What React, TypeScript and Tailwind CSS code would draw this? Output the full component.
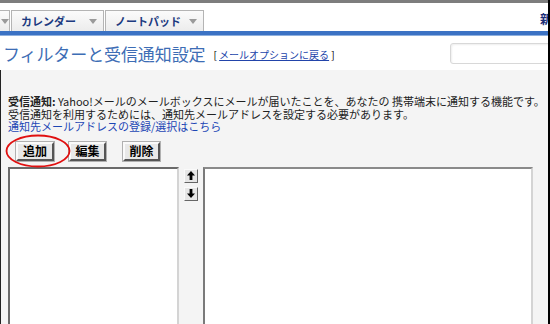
import React from 'react';

const jp = { fontFamily: '"Noto Sans CJK JP", "Noto Sans", sans-serif' };

const Caret = ({ className = '' }: { className?: string }) => (
    <svg width="8" height="5" viewBox="0 0 8 5" className={className}>
        <polygon points="0,0 8,0 4,5" fill="#9a9a9a" />
    </svg>
);

const Tab = (props: { label: string; width: string }) => (
    <div
        className={`${props.width} h-[21px] flex items-center justify-between pl-[9px] pr-[6px] border border-b-0 border-[#b4b4b4] bg-gradient-to-b from-[#fbfbfb] to-[#ececec]`}
    >
        <span className="text-[11px] font-bold text-[#1c3a80] leading-none">
            {props.label}
        </span>
        <Caret />
    </div>
);

const Btn = (props: { label: string; width: string }) => (
    <div
        className={`${props.width} h-[19px] flex items-center justify-center bg-[#e8e8e8] border-2 border-t-[#fafafa] border-l-[#fafafa] border-r-[#555] border-b-[#555] outline outline-1 outline-[#b0b0b0] text-[12px] font-bold text-black leading-none`}
    >
        {props.label}
    </div>
);

const ArrowBtn = ({ up }: { up: boolean }) => (
    <div className="w-[14px] h-[14px] flex items-center justify-center bg-[#e6e6e6] border border-t-[#fafafa] border-l-[#fafafa] border-r-[#666] border-b-[#666]">
        <svg width="8" height="9" viewBox="0 0 8 9">
            {up ? (
                <>
                    <polygon points="4,0 8,4.5 0,4.5" fill="#000" />
                    <rect x="2.6" y="4" width="2.8" height="5" fill="#000" />
                </>
            ) : (
                <>
                    <rect x="2.6" y="0" width="2.8" height="5" fill="#000" />
                    <polygon points="0,4.5 8,4.5 4,9" fill="#000" />
                </>
            )}
        </svg>
    </div>
);

export default function App() {
    return (
        <div
            className="w-[550px] h-[324px] overflow-hidden bg-white border-r-2 border-black flex flex-col"
            style={jp}
        >
            <div className="h-[3px] bg-[#7d7d7d] shrink-0" />
            <div className="h-[28px] shrink-0 flex items-end">
                <div className="w-[10px] h-[21px] flex items-center border-r border-t border-[#b4b4b4] bg-gradient-to-b from-[#fbfbfb] to-[#ececec]">
                    <Caret className="ml-[1px]" />
                </div>
                <div className="w-[1px]" />
                <Tab label="カレンダー" width="w-[93px]" />
                <div className="w-[1px]" />
                <Tab label="ノートパッド" width="w-[99px]" />
                <div className="ml-auto self-center pt-[4px] text-[12px] font-bold text-[#1c2f78] mr-[-4px]">
                    新
                </div>
            </div>
            <div className="h-[5px] shrink-0 bg-[#3b72c4] border-b border-[#8fb0de]" />
            <div className="h-[34px] shrink-0 flex items-center pl-[3px]">
                <span className="text-[17px] text-[#3d6db5] leading-none tracking-[-0.1px]">
                    フィルターと受信通知設定
                </span>
                <span className="ml-[8px] text-[10px] text-black leading-none mt-[3px]">
                    [{' '}
                    <span className="text-[#2244aa] underline">
                        メールオプションに戻る
                    </span>{' '}
                    ]
                </span>
                <div className="ml-auto mr-[-12px] w-[110px] h-[21px] shrink-0 border border-[#d8d8d8] rounded-[3px] shadow-[inset_1px_1px_2px_#eee]" />
            </div>
            <div className="flex-1 bg-[#f4f4f4] border-l border-[#222] pt-[25px]">
                <div className="pl-[7px] text-[11px] leading-[12.5px] text-[#222] whitespace-nowrap">
                    <div>
                        <span className="font-bold">受信通知:</span> Yahoo!メールのメールボックスにメールが届いたことを、あなたの 携帯端末に通知する機能です。
                    </div>
                    <div>
                        受信通知を利用するためには、通知先メールアドレスを設定する必要があります。
                    </div>
                    <div className="text-[#1c46b4]">
                        通知先メールアドレスの登録/選択はこちら
                    </div>
                </div>
                <div className="relative flex mt-[9px] pl-[15px]">
                    <Btn label="追加" width="w-[38px]" />
                    <div className="w-[15px]" />
                    <Btn label="編集" width="w-[37px]" />
                    <div className="w-[17px]" />
                    <Btn label="削除" width="w-[37px]" />
                    <svg
                        className="absolute left-[4px] top-[-8px]"
                        width="66"
                        height="34"
                        viewBox="0 0 66 34"
                    >
                        <ellipse
                            cx="33"
                            cy="17"
                            rx="31.5"
                            ry="15.5"
                            fill="none"
                            stroke="#e01010"
                            strokeWidth="1.8"
                        />
                    </svg>
                </div>
                <div className="flex mt-[6px] pl-[7px]">
                    <div className="w-[171px] h-[170px] bg-white border-2 border-t-[#6a6a6a] border-l-[#6a6a6a] border-r-[#d4d4d4] border-b-[#d4d4d4]" />
                    <div className="w-[24px] flex flex-col items-center pt-[2px] gap-[4px]">
                        <ArrowBtn up />
                        <ArrowBtn up={false} />
                    </div>
                    <div className="w-[330px] h-[170px] bg-white border-2 border-t-[#8a8a8a] border-l-[#7a7a7a] border-r-[#d4d4d4] border-b-[#d4d4d4]" />
                </div>
            </div>
        </div>
    );
}
